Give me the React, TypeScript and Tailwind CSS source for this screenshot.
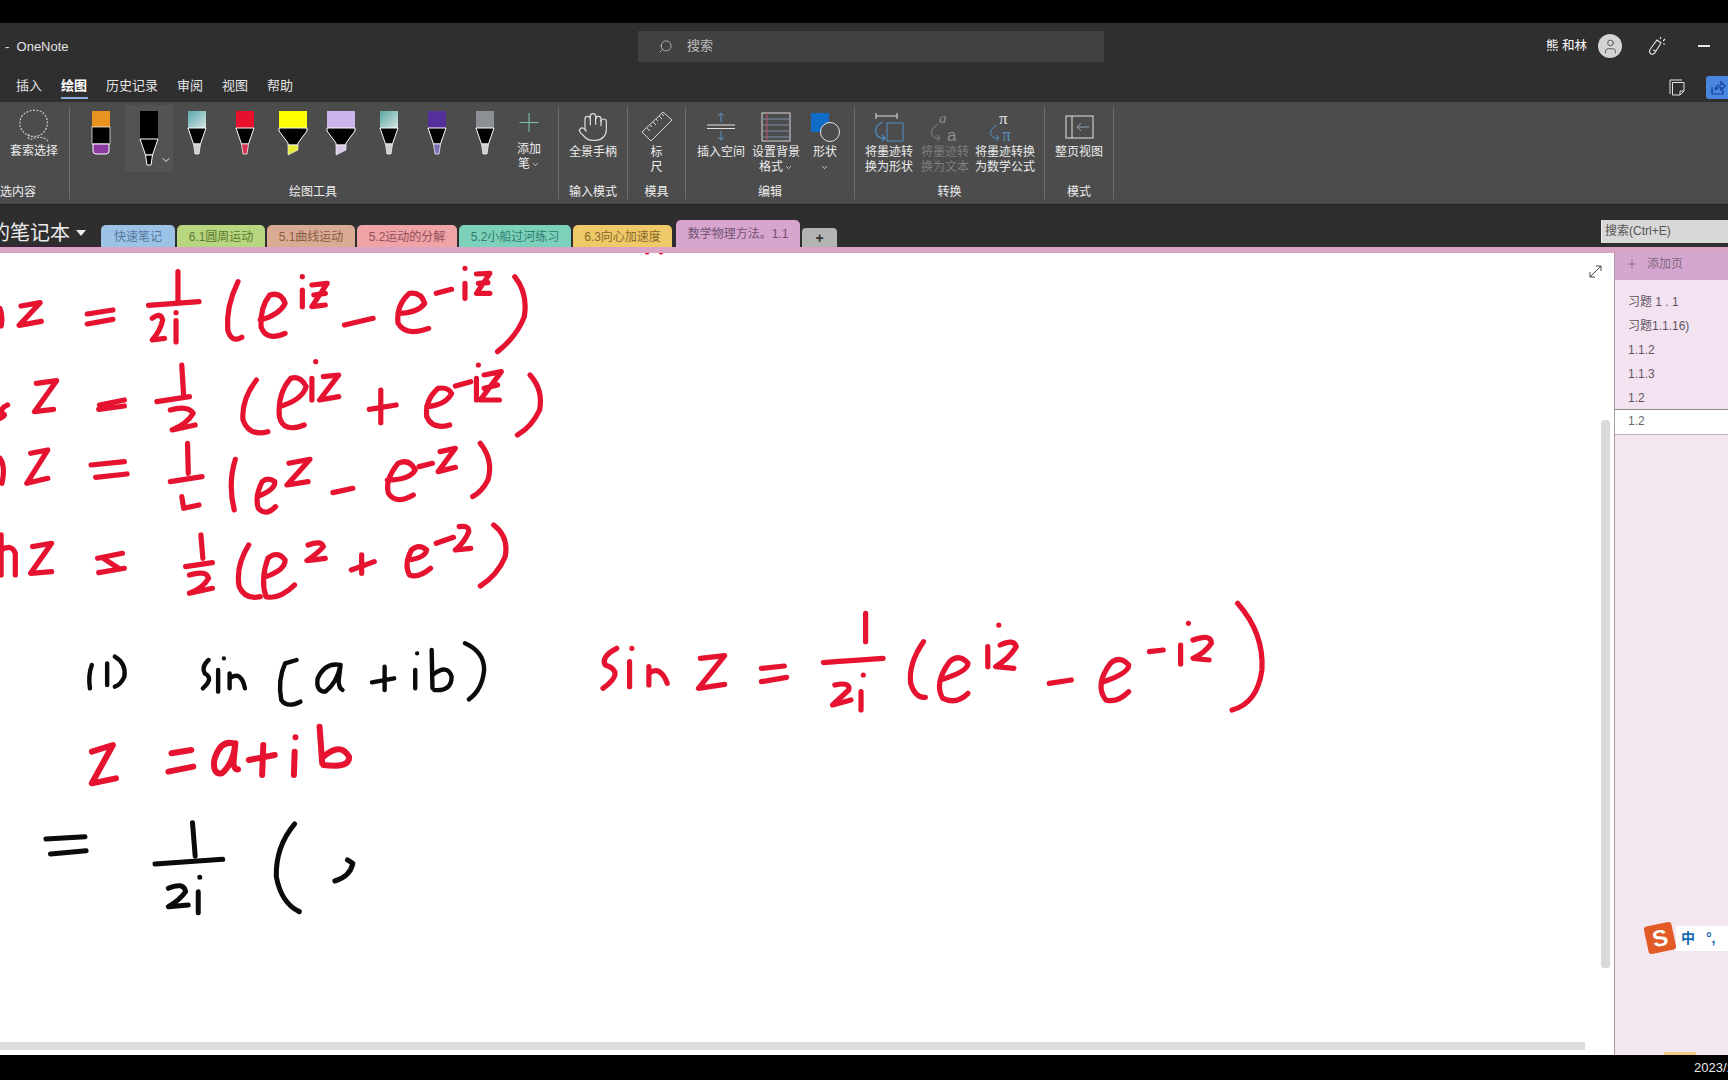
import { ChevronDown, Hand, Plus, Search, User } from "lucide-react"
import type { ReactNode } from "react"

const RED = "#e5132f"
const INK = "#0b0b0b"

// Ink strokes are written in the coordinates of the zoomed crops, the group transform maps them back
const redTop = [
  // sin z
  "M0 175 Q8 200 3 228",
  "M55 168 L105 158 L50 226 L108 214",
  "M228 192 L295 180 M228 222 L295 208",
  "M465 65 L465 155 M388 166 L520 155",
  "M398 205 Q420 185 425 210 Q420 240 398 270 L430 265 M460 212 L460 276 M460 188 l0 .1",
  "M622 95 Q590 170 595 240 Q605 280 632 262",
  "M680 210 Q730 195 745 160 Q735 125 705 135 Q680 170 682 230 Q695 275 745 250",
  "M790 120 L790 170 M790 80 l0 .1 M815 105 L855 100 L815 170 L850 165 M820 135 L850 130",
  "M900 225 L975 205",
  "M1040 190 Q1090 190 1110 160 Q1100 125 1070 130 Q1035 165 1040 220 Q1060 260 1120 235",
  "M1140 130 L1180 118 M1215 100 L1215 145 M1215 55 l0 .1 M1245 72 L1280 70 L1245 130 L1280 130 M1250 100 L1275 98",
  "M1345 80 Q1380 130 1370 200 Q1350 260 1300 305",
  // cos z
  "M20 465 Q0 475 5 490 Q20 495 0 505",
  "M95 400 L148 392 L90 485 L140 478",
  "M260 465 L325 450 M258 478 L325 468",
  "M475 345 L480 440 M410 455 L495 440",
  "M445 480 Q490 465 505 490 Q490 520 450 540 L510 525",
  "M670 390 Q630 450 635 510 Q650 560 700 545",
  "M730 470 Q790 450 800 410 Q785 375 760 385 Q725 430 730 500 Q740 550 795 525",
  "M815 385 L815 450 M825 335 l0 .1 M845 380 L885 375 L835 450 L885 440",
  "M965 478 L1035 465 M995 420 L995 518",
  "M1115 470 Q1165 465 1180 430 Q1170 410 1145 415 Q1110 450 1115 500 Q1130 540 1175 525",
  "M1190 408 L1230 395 M1245 385 L1245 450 M1250 345 l0 .1 M1265 375 L1310 365 L1255 450 L1305 450 M1265 415 L1300 405",
  "M1385 375 Q1420 420 1410 480 Q1390 530 1352 555",
  // sinh z
  "M0 625 Q15 650 5 700",
  "M80 610 L125 600 L70 700 L125 685",
  "M238 645 L325 635 M250 682 L332 672",
  "M490 580 L492 670 M445 695 L528 680 M475 740 L480 775 L520 765",
  "M615 628 Q595 700 612 780",
  "M672 740 Q720 720 718 695 Q700 680 685 695 Q665 740 675 775 Q695 800 720 770",
  "M755 640 L810 628 L750 705 L805 695",
  "M870 728 L922 715",
  "M1012 690 Q1070 690 1085 660 Q1070 625 1040 640 Q1005 690 1015 730 Q1035 765 1080 735",
  "M1095 650 L1130 640 M1150 605 L1190 595 L1145 665 L1190 652",
  "M1255 580 Q1290 630 1275 690 Q1260 725 1235 740",
  // cosh z
  "M3 855 L3 975 M3 900 Q30 880 40 910 L40 975",
  "M85 890 L135 880 L80 970 L135 965",
  "M255 925 L320 910 M258 968 L325 955 M270 925 L310 955",
  "M525 855 L530 925 M485 950 L555 938",
  "M495 975 Q540 960 545 985 Q530 1015 495 1030 L555 1015",
  "M650 885 Q615 950 625 1010 Q640 1050 680 1040",
  "M695 980 Q745 960 745 930 Q725 900 700 925 Q680 990 695 1040 Q730 1050 770 1005",
  "M805 885 Q840 870 845 890 Q830 910 802 932 L850 925",
  "M918 960 L978 935 M945 915 L945 970",
  "M1065 930 Q1110 925 1115 900 Q1095 880 1075 900 Q1055 945 1070 975 Q1095 985 1125 955",
  "M1140 880 L1185 862 M1200 830 Q1225 825 1225 845 Q1215 875 1190 900 L1230 895",
  "M1290 825 Q1330 860 1320 920 Q1300 975 1255 1008",
]

const redLower = [
  "M240 395 L295 375 L240 490 L303 475",
  "M448 400 L500 390 M440 455 L505 440",
  "M610 370 Q575 360 560 420 Q555 465 580 460 Q610 430 615 370 L610 430 Q612 450 622 448",
  "M650 420 L718 405 M688 375 L685 465",
  "M770 395 L768 465 M772 352 l0 .1",
  "M835 320 L842 430 M845 410 Q890 365 912 410 Q915 445 845 435",
]

const blackLower = [
  "M120 657 L222 650 M132 702 L225 692",
  "M503 608 L510 708 M405 732 L582 718",
  "M440 805 Q480 785 485 815 Q470 840 440 860 L492 855 M518 815 L518 878 M522 772 l0 .1",
  "M770 612 Q720 680 722 770 Q735 850 782 875",
  "M908 720 L922 730 Q915 770 875 783",
]

const blackThin = [
  "M240 135 Q230 165 235 205 M280 130 L280 195 M300 110 Q330 130 325 170 Q315 195 300 200",
  "M545 120 Q525 140 535 160 Q560 175 530 205 M570 150 L570 215 M585 115 l0 .1 M600 160 L600 205 M600 175 Q630 150 640 205",
  "M775 120 L745 130 Q725 180 735 240 Q750 265 785 245",
  "M890 135 Q850 125 830 175 Q825 215 850 215 Q880 190 890 135 L885 180 Q885 205 895 210",
  "M972 187 L1030 175 M1005 140 L1005 210",
  "M1085 150 L1085 205 M1090 100 l0 .1",
  "M1128 90 L1130 205 M1130 165 Q1170 130 1180 170 Q1180 215 1135 210",
  "M1215 70 Q1265 95 1265 150 Q1260 210 1225 238",
]

const redSide = [
  "M80 175 Q45 200 55 225 Q100 245 50 295",
  "M108 215 L108 290 M113 175 l0 .1",
  "M150 230 L150 285 M150 250 Q175 225 190 280",
  "M262 205 L315 197 L258 295 L315 283",
  "M395 235 L445 228 M395 275 L450 262",
  "M622 70 L622 155 M530 218 Q600 210 660 205",
  "M555 285 Q590 275 585 300 L550 345 L590 330 M612 305 L612 360 M617 255 l0 .1",
  "M748 155 Q715 220 720 280 Q730 325 752 322",
  "M785 270 Q845 245 845 220 Q825 190 805 215 Q770 280 790 325 Q820 345 845 310",
  "M888 170 L888 230 M912 105 l0 .1 M915 165 Q945 145 950 170 Q935 205 905 230 L945 235",
  "M1022 280 L1070 270",
  "M1140 275 Q1195 250 1195 225 Q1175 195 1155 220 Q1120 285 1145 330 Q1170 340 1195 305",
  "M1240 185 L1270 180 M1308 165 L1308 222 M1325 100 l0 .1 M1335 150 Q1375 130 1375 160 Q1360 190 1335 205 L1370 210",
  "M1432 40 Q1490 130 1485 240 Q1475 340 1420 360",
]

function Ink({ paths, color, width, transform }: { paths: string[]; color: string; width: number; transform: string }) {
  return (
    <g transform={transform} fill="none" stroke={color} strokeWidth={width} strokeLinecap="round" strokeLinejoin="round">
      {paths.map((d) => (
        <path key={d} d={d} vectorEffect="non-scaling-stroke" />
      ))}
    </g>
  )
}

function Pen({ color, tip, gradient, wide }: { color: string; tip: string; gradient?: boolean; wide?: boolean }) {
  const id = "g" + color.slice(1)
  if (wide) {
    return (
      <svg width="30" height="46" viewBox="0 0 30 46">
        <rect x="1" y="1" width="28" height="17" fill={color} />
        <path d="M1 18 H29 V21 L20 33 V35 H10 V33 L1 21 Z" fill="#000" stroke="#fff" />
        <path d="M10 35 H20 V40 L10 45 Z" fill={tip} stroke="#fff" strokeWidth="0.6" />
      </svg>
    )
  }
  return (
    <svg width="20" height="46" viewBox="0 0 20 46">
      <defs>
        <linearGradient id={id} x1="0" y1="0" x2="1" y2="1">
          <stop offset="0" stopColor={color} />
          <stop offset="1" stopColor={gradient ? "#d5e6e2" : color} />
        </linearGradient>
      </defs>
      <rect x="1" y="1" width="18" height="17" fill={`url(#${id})`} />
      <path d="M1 18 H19 L13.5 34 H6.5 Z" fill="#000" stroke="#fff" />
      <path d="M6.5 34 H13.5 L12 44 H8 Z" fill={tip} stroke="#eee" strokeWidth="0.8" />
    </svg>
  )
}

function Lasso() {
  return (
    <svg width="36" height="36" viewBox="0 0 36 36" fill="none" stroke="#c9c9c9" strokeWidth="1.2" strokeDasharray="2 1.4">
      <path d="M14 28 C5 25 2 17 5 10 C8 3 19 0 26 4 C33 9 33 19 27 25 C24 28 20 29 14 28" />
      <path d="M13 26 C10 30 14 33 18 30 C22 29 28 28 33 34" />
    </svg>
  )
}

function SelectedPen() {
  return (
    <svg width="20" height="57" viewBox="0 0 20 57">
      <rect x="1" y="1" width="18" height="28" fill="#000" />
      <path d="M1 29 H19 L13.5 45 H6.5 Z" fill="#000" stroke="#fff" />
      <path d="M6.5 45 H13.5 L12 55 H8 Z" fill="#000" stroke="#fff" />
    </svg>
  )
}

function Eraser() {
  return (
    <svg width="20" height="46" viewBox="0 0 20 46">
      <rect x="1" y="1" width="18" height="16" fill="#e8921f" />
      <rect x="1" y="17" width="18" height="17" fill="#000" stroke="#fff" strokeWidth="0.7" />
      <path d="M2 34 H18 V41 Q18 44 15 44 H5 Q2 44 2 41 Z" fill="#8e3aa3" stroke="#fff" />
    </svg>
  )
}

function Ruler() {
  return (
    <svg width="32" height="32" viewBox="0 0 32 32" fill="none" stroke="#d5d5d5" strokeWidth="1">
      <path d="M1 21 L22 1 L31 9 L10 30 Z" />
      <path d="M6 17 l3 3 M9 14 l2 2 M12 11 l3 3 M15 8 l2 2 M18 5 l3 3 M21 3 l2 2" />
    </svg>
  )
}

function InsertSpace() {
  return (
    <svg width="30" height="30" viewBox="0 0 30 30" fill="none">
      <path d="M15 1 V10 M12 4 L15 1 L18 4 M15 19 V28 M12 25 L15 28 L18 25" stroke="#5a93c7" />
      <path d="M1 13 H29 M1 16.5 H29" stroke="#e2e2e2" />
    </svg>
  )
}

function Background() {
  return (
    <svg width="30" height="30" viewBox="0 0 30 30" fill="none">
      <rect x="1" y="1" width="28" height="28" stroke="#d8d8d8" />
      <path d="M1 7 H29 M1 13 H29 M1 19 H29 M1 25 H29" stroke="#7d8fa8" />
      <path d="M6 1 V29" stroke="#c25068" />
    </svg>
  )
}

function Shapes() {
  return (
    <svg width="30" height="30" viewBox="0 0 30 30" fill="none">
      <rect x="1" y="1" width="18" height="19" fill="#0f6cc8" />
      <circle cx="20" cy="20" r="9.5" fill="#4c4c4c" stroke="#e2e2e2" />
    </svg>
  )
}

function InkToShape() {
  return (
    <svg width="32" height="32" viewBox="0 0 32 32" fill="none">
      <path d="M3 2 V8 M24 2 V8 M3 5 H24" stroke="#e0e0e0" />
      <rect x="14" y="12" width="16" height="18" stroke="#4f8fc9" />
      <path d="M10 11 Q1 15 3 22 Q5 28 12 27 M9 24 L12 27 L9 30" stroke="#4f8fc9" strokeWidth="1.2" />
    </svg>
  )
}

function InkToText() {
  return (
    <svg width="32" height="38" viewBox="0 0 32 38" fill="none">
      <text x="10" y="15" fill="#8c8c8c" fontSize="15" fontStyle="italic" fontFamily="Liberation Serif, serif">a</text>
      <text x="18" y="33" fill="#8c8c8c" fontSize="17" fontFamily="Liberation Sans, sans-serif">a</text>
      <path d="M9 16 Q1 21 3 27 Q5 31 11 30 M8 27 L11 30 L8 33" stroke="#7d8791" />
    </svg>
  )
}

function InkToMath() {
  return (
    <svg width="34" height="38" viewBox="0 0 34 38" fill="none">
      <text x="11" y="16" fill="#e0e0e0" fontSize="17" fontFamily="Liberation Serif, serif">π</text>
      <text x="14" y="33" fill="#5c8fbd" fontSize="18" fontFamily="Liberation Serif, serif">π</text>
      <path d="M9 17 Q1 21 3 27 Q5 31 11 30 M8 27 L11 30 L8 33" stroke="#4f8fc9" />
    </svg>
  )
}

function PageView() {
  return (
    <svg width="29" height="24" viewBox="0 0 29 24" fill="none">
      <rect x="1" y="1" width="27" height="22" stroke="#e2e2e2" />
      <path d="M7 1 V23" stroke="#e2e2e2" />
      <path d="M24 12 H12 M16 8 L12 12 L16 16" stroke="#8fa3b5" />
    </svg>
  )
}

function RibbonButton({ width, icon, lines, dim, chevron }: { width: string; icon: ReactNode; lines: string[]; dim?: boolean; chevron?: boolean }) {
  return (
    <div className={`${width} flex flex-col items-center shrink-0`}>
      <div className="h-[37px] flex items-center justify-center">{icon}</div>
      <div className={`text-[12px] leading-[15px] text-center whitespace-nowrap ${dim ? "text-[#7d7d7d]" : "text-[#ececec]"}`}>
        {lines.map((line, i) => (
          <div key={line + i} className="h-[15px] flex items-center justify-center gap-[1px]">
            {line}
            {chevron && i === lines.length - 1 && <ChevronDown size={9} strokeWidth={2} />}
          </div>
        ))}
      </div>
    </div>
  )
}

function RibbonGroup({ width, label, pad, labelClass, children }: { width: string; label: string; pad?: string; labelClass?: string; children: ReactNode }) {
  return (
    <div className={`${width} flex shrink-0`}>
      <div className="flex-1 flex flex-col justify-between min-w-0 pt-[6px] pb-[3px]">
        <div className={`flex ${pad ?? ""}`}>{children}</div>
        <div className={`h-[18px] text-[12px] leading-[18px] text-[#ececec] whitespace-nowrap ${labelClass ?? "text-center"}`}>{label}</div>
      </div>
      <div className="w-px my-[5px] bg-[#6e6e6e]" />
    </div>
  )
}

const pens = [
  { color: "#5aa6ad", tip: "#cfcfcf", gradient: true },
  { color: "#e8112d", tip: "#d8304f" },
  { color: "#ffff00", tip: "#e6ee3a", wide: true },
  { color: "#cdb5ec", tip: "#d8c8e6", wide: true },
  { color: "#5aa6a4", tip: "#cfcfcf", gradient: true },
  { color: "#56309a", tip: "#7a70b8" },
  { color: "#8c8f94", tip: "#cfcfcf" },
]

const tabs = [
  { name: "快速笔记", w: "w-[74px]", bg: "bg-[#9cc3e6]", fg: "text-[#55789a]" },
  { name: "6.1圆周运动", w: "w-[88px]", bg: "bg-[#b7d67f]", fg: "text-[#5d7a32]" },
  { name: "5.1曲线运动", w: "w-[88px]", bg: "bg-[#d9ab93]", fg: "text-[#8a5d48]" },
  { name: "5.2运动的分解", w: "w-[100px]", bg: "bg-[#eea3a6]", fg: "text-[#94505a]" },
  { name: "5.2小船过河练习", w: "w-[112px]", bg: "bg-[#7dd1ba]", fg: "text-[#2f7d6c]" },
  { name: "6.3向心加速度", w: "w-[99px]", bg: "bg-[#efc968]", fg: "text-[#87682a]" },
]

const pages = ["习题 1 . 1", "习题1.1.16)", "1.1.2", "1.1.3", "1.2"]

export default function App() {
  return (
    <div className="w-[1728px] h-[1080px] overflow-hidden flex flex-col bg-black font-['Liberation_Sans','Noto_Sans_CJK_SC',sans-serif]">
      <div className="h-[23px] shrink-0 bg-black" />

      {/* Title bar */}
      <div className="h-[46px] shrink-0 flex items-center bg-[#2f2f2f] text-[13px] text-[#e4e4e4]">
        <div className="w-[638px] shrink-0 pl-[5px] pt-px">-&nbsp;&nbsp;OneNote</div>
        <div className="w-[466px] h-[31px] shrink-0 flex items-center gap-[14px] pl-[20px] bg-[#414141] text-[#bdbdbd]">
          <Search size={15} strokeWidth={1.2} className="-scale-x-100 text-[#c8c8c8]" />
          <span>搜索</span>
        </div>
        <div className="ml-auto flex items-center text-white">
          <span className="text-[12.5px] whitespace-nowrap">熊 和林</span>
          <div className="ml-[11px] w-[24px] h-[24px] rounded-full bg-[#d3d3d3] flex items-center justify-center">
            <User size={17} strokeWidth={1.4} className="text-[#5c5c5c]" />
          </div>
          <svg className="ml-[26px]" width="18" height="20" viewBox="0 0 18 20" fill="none" stroke="#e8e8e8" strokeWidth="1.1">
            <path d="M3 18 Q0 16 3 12 L9 4 L13 7 L8 15 Q6 19 3 18 Z M5 14 L8 15" />
            <path d="M12 3 L13 1 M15 5 L17 3 M15 8 L17 8" />
          </svg>
          <div className="ml-[32px] mr-[18px] w-[12px] h-[2px] bg-[#e8e8e8]" />
        </div>
      </div>

      {/* Ribbon tabs */}
      <div className="h-[33px] shrink-0 flex items-start bg-[#2f2f2f] text-[13px] text-[#e4e4e4]">
        <div className="w-[61px] pl-[16px] leading-[33px]">插入</div>
        <div className="w-[45px] relative leading-[33px] font-bold text-white">
          绘图
          <div className="absolute left-0 top-[28px] w-[27px] h-[2px] bg-[#8ea9e0]" />
        </div>
        <div className="w-[71px] leading-[33px]">历史记录</div>
        <div className="w-[45px] leading-[33px]">审阅</div>
        <div className="w-[45px] leading-[33px]">视图</div>
        <div className="leading-[33px]">帮助</div>
        <div className="ml-auto flex items-center h-[28px] mt-[4px]">
          <svg width="16" height="17" viewBox="0 0 16 17" fill="none" stroke="#e4e4e4">
            <path d="M1 15 V1 H13 M3.5 3.5 H15 V12 L11 16 H3.5 Z M11 16 V12 H15" />
          </svg>
          <div className="ml-[21px] w-[22px] h-[23px] rounded-l-[3px] bg-[#4a86e0] flex items-center pl-[5px]">
            <svg width="15" height="15" viewBox="0 0 15 15" fill="none" stroke="#123f96" strokeWidth="1.2">
              <path d="M1 7 V14 H12 V10 M4 10 Q5 5 10 5 V2 L14 6 L10 10 V7.5 Q6 7.5 4 10 Z" />
            </svg>
          </div>
        </div>
      </div>

      {/* Ribbon */}
      <div className="h-[102px] shrink-0 flex bg-[#4c4c4c]">
        <RibbonGroup width="w-[70px]" label="选内容" labelClass="text-left">
          <div className="w-[68px] -mt-px">
            <RibbonButton width="w-[68px]" icon={<Lasso />} lines={["套索选择"]} />
          </div>
        </RibbonGroup>
        <div className="w-[489px] flex shrink-0">
          <div className="flex-1 flex flex-col justify-between pt-[3px] pb-[3px]">
            <div className="flex pl-[7px] h-[67px]">
              <div className="w-12 pt-[5px] flex justify-center">
                <Eraser />
              </div>
              <div className="w-12 h-[67px] pt-[5px] flex justify-center relative bg-[#535353]">
                <SelectedPen />
                <ChevronDown size={12} strokeWidth={2} className="absolute left-[35px] top-[49px] text-[#e8e8e8]" />
              </div>
              {pens.map((pen) => (
                <div key={pen.color} className="w-12 pt-[5px] flex justify-center">
                  <Pen {...pen} />
                </div>
              ))}
              <div className="w-12 flex flex-col items-center -ml-[4px] text-[12px] leading-[15px] text-[#ececec]">
                <Plus size={34} strokeWidth={0.8} className="text-[#7fc4a4] mt-[2px]" />
                <div className="mt-[4px]">添加</div>
                <div className="flex items-center gap-[1px]">
                  笔
                  <ChevronDown size={9} strokeWidth={2} />
                </div>
              </div>
            </div>
            <div className="h-[18px] text-[12px] leading-[18px] text-center text-[#ececec] pr-[2px]">绘图工具</div>
          </div>
          <div className="w-px my-[5px] bg-[#6e6e6e]" />
        </div>
        <RibbonGroup width="w-[69px]" label="输入模式">
          <RibbonButton width="w-[68px]" icon={<Hand size={32} strokeWidth={0.9} className="text-[#dcdcdc]" />} lines={["全景手柄"]} />
        </RibbonGroup>
        <RibbonGroup width="w-[58px]" label="模具">
          <RibbonButton width="w-[57px]" icon={<Ruler />} lines={["标", "尺"]} />
        </RibbonGroup>
        <RibbonGroup width="w-[169px]" label="编辑" pad="pl-[7px]">
          <RibbonButton width="w-[56px]" icon={<InsertSpace />} lines={["插入空间"]} />
          <RibbonButton width="w-[54px]" icon={<Background />} lines={["设置背景", "格式"]} chevron />
          <RibbonButton width="w-[44px]" icon={<Shapes />} lines={["形状", ""]} chevron />
        </RibbonGroup>
        <RibbonGroup width="w-[190px]" label="转换" pad="pl-[6px]">
          <RibbonButton width="w-[56px]" icon={<InkToShape />} lines={["将墨迹转", "换为形状"]} />
          <RibbonButton width="w-[56px]" icon={<InkToText />} lines={["将墨迹转", "换为文本"]} dim />
          <RibbonButton width="w-[64px]" icon={<InkToMath />} lines={["将墨迹转换", "为数学公式"]} />
        </RibbonGroup>
        <RibbonGroup width="w-[69px]" label="模式">
          <RibbonButton width="w-[68px]" icon={<PageView />} lines={["整页视图"]} />
        </RibbonGroup>
      </div>

      {/* Notebook and section tabs */}
      <div className="h-[43px] shrink-0 flex items-end bg-[#2e2e2e] border-t border-[#222222]">
        <div className="w-[101px] h-full shrink-0 flex items-center overflow-hidden border-b-2 border-[#3a2238] pt-[15px]">
          <span className="-ml-[10px] text-[20px] text-[#ececec] whitespace-nowrap">的笔记本</span>
          <svg className="ml-[6px] shrink-0" width="10" height="6" viewBox="0 0 10 6">
            <path d="M0 0 H10 L5 6 Z" fill="#ececec" />
          </svg>
        </div>
        <div className="flex items-end gap-[2px]">
          {tabs.map((tab) => (
            <div key={tab.name} className={`${tab.w} ${tab.bg} ${tab.fg} h-[22px] rounded-t-[5px] text-[12px] leading-[24px] text-center whitespace-nowrap`}>
              {tab.name}
            </div>
          ))}
          <div className="w-[124px] ml-[2px] h-[27px] rounded-t-[5px] bg-[#d8a5cf] text-[#6e5470] text-[12px] leading-[28px] text-center whitespace-nowrap">
            数学物理方法。1.1
          </div>
          <div className="w-[35px] h-[19px] rounded-t-[4px] bg-[#b3b3b3] text-[#333333] text-[14px] font-bold leading-[20px] text-center">+</div>
        </div>
        <div className="ml-auto mb-[4px] w-[127px] h-[23px] bg-[#d8d8d8] border-l border-[#eeeeee] pl-[3px] text-[12px] leading-[23px] text-[#555555] whitespace-nowrap">
          搜索(Ctrl+E)
        </div>
      </div>
      <div className="h-[6px] shrink-0 bg-[#d8a5c6]" />

      {/* Page area */}
      <div className="flex-1 min-h-0 flex bg-white">
        <div className="relative w-[1614px] shrink-0 bg-white">
          <svg className="absolute inset-0" width="1614" height="802" viewBox="0 253 1614 802">
            <Ink paths={redTop} color={RED} width={5.2} transform="translate(0 250) scale(0.3827 0.3333)" />
            <Ink paths={blackThin} color={INK} width={4.4} transform="translate(0 620) scale(0.3827 0.3333)" />
            <Ink paths={redLower} color={RED} width={6} transform="translate(0 620) scale(0.3827 0.3333)" />
            <Ink paths={blackLower} color={INK} width={5} transform="translate(0 620) scale(0.3827 0.3333)" />
            <Ink paths={redSide} color={RED} width={5.2} transform="translate(580 590) scale(0.4592 0.3333)" />
            <path d="M647 251 l0 1 M661 251 l0 1" stroke={RED} strokeWidth="5" strokeLinecap="round" />
          </svg>
          <svg className="absolute left-[1589px] top-[12px]" width="13" height="13" viewBox="0 0 13 13" fill="none" stroke="#444444">
            <path d="M1 12 L12 1 M7 1 H12 V6 M1 7 V12 H6" />
          </svg>
          <div className="absolute left-[1601px] top-[167px] w-[9px] h-[548px] rounded-[3px] bg-[#d9d9d9]" />
          <div className="absolute left-0 top-[789px] w-[1585px] h-[8px] bg-[#dddddd]" />
        </div>

        {/* Page list */}
        <div className="relative flex-1 flex flex-col border-l border-[#a89aa6] text-[12px] text-[#5f545f]">
          <div className="h-[27px] shrink-0 flex items-center bg-[#d5a6cf] pl-[10px] pb-[6px] gap-[8px] text-[#7e6a7d]">
            <Plus size={14} strokeWidth={1} className="text-[#5f4c60]" />
            <span>添加页</span>
          </div>
          <div className="h-[130px] shrink-0 pt-[10px] bg-[#f3e3f1] border-b border-[#8f8a90]">
            {pages.map((page, i) => (
              <div key={page + i} className="h-[24px] pl-[13px] leading-[24px] whitespace-nowrap">{page}</div>
            ))}
          </div>
          <div className="h-[24px] shrink-0 pl-[13px] leading-[23px] bg-white text-[#6a6a6a]">1.2</div>
          <div className="flex-1 bg-[#f2e6f1] border-t border-[#bfb4bd]" />
          <div className="absolute left-[49px] bottom-0 w-[32px] h-[3px] bg-[#f5c98a]" />

          {/* IME status bar */}
          <div className="absolute left-[31px] top-[671px] flex items-center">
            <div className="w-[28px] h-[28px] rotate-[-12deg] rounded-[3px] bg-[#e25a26] flex items-center justify-center text-white text-[23px] font-bold leading-none">S</div>
            <div className="ml-[2px] w-[60px] h-[25px] bg-white pl-[5px] flex items-center gap-[11px] text-[14px] font-bold text-[#1268b3] whitespace-nowrap">
              <span>中</span>
              <span>°,</span>
            </div>
          </div>
        </div>
      </div>

      {/* Taskbar */}
      <div className="h-[25px] shrink-0 flex items-center justify-end bg-black text-[13px] text-[#e8e8e8] overflow-hidden">
        <span className="w-[34px] whitespace-nowrap">2023/1</span>
      </div>
    </div>
  )
}
